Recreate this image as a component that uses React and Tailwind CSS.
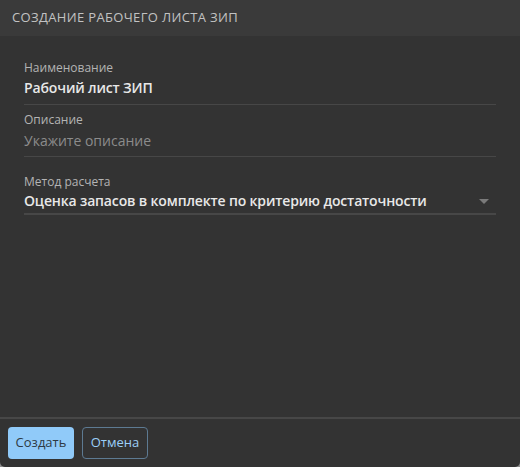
import React from 'react';

function Field({ label, value, placeholder, select }) {
  const pad = select
    ? 'pt-[1px] pb-[2px] border-b-2'
    : value
      ? 'pt-[2px] pb-[6px] border-b'
      : 'pt-[3px] pb-[5px] border-b';
  return (
    <div className="flex flex-col">
      <label className="text-[12px] leading-[16px] text-[#b4b4b4]">{label}</label>
      <div className={`flex items-center justify-between border-[#474747] ${pad}`}>
        <span
          className={`text-[14px] leading-[20px] ${
            value ? 'font-semibold tracking-[-0.15px] text-[#e8e8e8]' : 'text-[#8c8c8c]'
          }`}
        >
          {value || placeholder}
        </span>
        {select && (
          <svg width="10" height="5" viewBox="0 0 10 5" className="mr-[7px]">
            <path d="M0 0h10L5 5z" fill="#7a7a7a" />
          </svg>
        )}
      </div>
    </div>
  );
}

export default function App() {
  return (
    <div className="w-[520px] h-[467px] bg-[#8c8c8c] font-['Open_Sans',sans-serif]">
      <div className="w-full h-full flex flex-col bg-[#333333] rounded-b-[5px] overflow-hidden">
        {/* Title bar */}
        <div className="h-[36px] shrink-0 bg-[#3a3a3a] flex items-center px-3">
          <h2 className="text-[13px] tracking-[0.35px] text-[#c2c2c2] uppercase">
            Создание рабочего листа ЗИП
          </h2>
        </div>

        {/* Form */}
        <div className="flex-1 px-6 pt-[24px] flex flex-col">
          <Field label="Наименование" value="Рабочий лист ЗИП" />
          <div className="mt-[7px]">
            <Field label="Описание" placeholder="Укажите описание" />
          </div>
          <div className="mt-[17px]">
            <Field label="Метод расчета" value="Оценка запасов в комплекте по критерию достаточности" select />
          </div>
        </div>

        {/* Actions */}
        <div className="h-[50px] shrink-0 border-t-2 border-[#474747] flex items-center gap-2 px-2">
          <button className="h-[32px] w-[66px] rounded-[4px] bg-[#90caf9] text-[13px] text-[#2e3a44]">
            Создать
          </button>
          <button className="h-[32px] w-[66px] rounded-[4px] border border-[#5d7a92] text-[13px] text-[#9ccff8]">
            Отмена
          </button>
        </div>
      </div>
    </div>
  );
}
